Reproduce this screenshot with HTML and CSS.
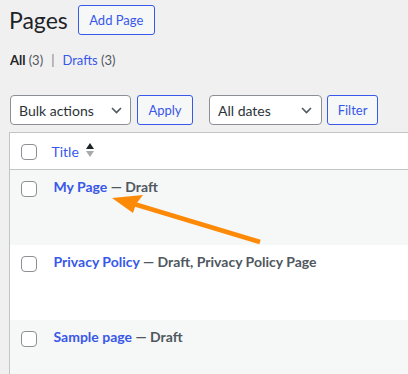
FILE: index.html
```html
<!DOCTYPE html>
<html>
<head>
   <meta charset="UTF-8">
   <title>Pages</title>
   <link rel="stylesheet" href="styles.css">
</head>
<body>
   <div class="wrap">
      <div class="page-head">
         <h1>Pages</h1>
         <a href="#" class="button add-new">Add Page</a>
      </div>

      <ul class="subsubsub">
         <li class="current">All <span class="count">(3)</span></li>
         <li class="sep">|</li>
         <li><a href="#">Drafts</a> <span class="count">(3)</span></li>
      </ul>

      <div class="tablenav">
         <div class="select bulk">
            <span>Bulk actions</span>
            <svg width="11" height="7" viewBox="0 0 11 7"><path d="M1 1l4.5 4.5L10 1" fill="none" stroke="#50575e" stroke-width="1.6"/></svg>
         </div>
         <a href="#" class="button apply">Apply</a>
         <div class="select dates">
            <span>All dates</span>
            <svg width="11" height="7" viewBox="0 0 11 7"><path d="M1 1l4.5 4.5L10 1" fill="none" stroke="#50575e" stroke-width="1.6"/></svg>
         </div>
         <a href="#" class="button filter">Filter</a>
      </div>

      <table class="list">
         <thead>
            <tr>
               <th class="cb"><span class="checkbox"></span></th>
               <th class="title-col">
                  <a href="#">Title</a>
                  <svg class="sort" width="8" height="15" viewBox="0 0 8 15">
                     <path d="M4 0L8 6H0z" fill="#1d2327"/>
                     <path d="M0 8h8l-4 6z" fill="#a7aaad"/>
                  </svg>
               </th>
            </tr>
         </thead>
         <tbody>
            <tr class="alt">
               <td class="cb"><span class="checkbox"></span></td>
               <td class="title-col"><strong><a href="#">My Page</a> <span class="state">— Draft</span></strong></td>
            </tr>
            <tr>
               <td class="cb"><span class="checkbox"></span></td>
               <td class="title-col"><strong><a href="#">Privacy Policy</a> <span class="state">— Draft, Privacy Policy Page</span></strong></td>
            </tr>
            <tr class="alt last">
               <td class="cb"><span class="checkbox"></span></td>
               <td class="title-col"><strong><a href="#">Sample page</a> <span class="state">— Draft</span></strong></td>
            </tr>
         </tbody>
      </table>
   </div>

   <!-- annotation arrow pointing at the first row -->
   <svg class="pointer" width="408" height="374" viewBox="0 0 408 374">
      <line x1="260" y1="242" x2="134" y2="204" stroke="#fd8a06" stroke-width="4.5"/>
      <polygon points="112,198 143,195 136,204 133,213" fill="#fd8a06"/>
   </svg>
</body>
</html>
```

FILE: styles.css
```css
      body {
         margin: 0;
         background: #f0f0f1;
         color: #1d2327;
         font-family: "Lato", "Liberation Sans", sans-serif;
         font-size: 13px;
         overflow: hidden;
      }
      a {
         text-decoration: none;
         color: #3858e9;
      }
      .wrap {
         padding: 5px 0 0 9px;
      }
      .page-head {
         display: flex;
         align-items: center;
         gap: 10px;
      }
      h1 {
         margin: 0;
         font-size: 23px;
         font-weight: normal;
         line-height: 30px;
      }
      .button {
         display: inline-flex;
         align-items: center;
         justify-content: center;
         box-sizing: border-box;
         height: 30px;
         border: 1px solid #3858e9;
         border-radius: 3px;
         background: #f6f7f7;
         color: #3858e9;
         font-size: 13px;
      }
      .add-new {
         width: 77px;
      }
      .apply {
         width: 56px;
         margin-left: 6px;
      }
      .filter {
         width: 51px;
         margin-left: 5px;
      }

      .subsubsub {
         list-style: none;
         margin: 15px 0 0 0;
         padding: 0 0 0 1px;
         display: flex;
         gap: 6px;
         line-height: 20px;
         color: #50575e;
      }
      .subsubsub .current {
         color: #1d2327;
         font-weight: bold;
      }
      .subsubsub .count {
         font-weight: normal;
         color: #50575e;
      }
      .subsubsub .sep {
         color: #787c82;
         margin: 0 2px;
      }

      .tablenav {
         display: flex;
         margin-top: 25px;
         padding-left: 1px;
      }
      .select {
         display: flex;
         align-items: center;
         justify-content: space-between;
         box-sizing: border-box;
         height: 30px;
         padding: 0 8px;
         border: 1px solid #8c8f94;
         border-radius: 4px;
         background: white;
         color: #2c3338;
         font-size: 14px;
      }
      .bulk {
         width: 121px;
      }
      .dates {
         width: 113px;
         margin-left: 16px;
         padding-right: 9px;
      }

      /* table runs off the right and bottom edge, so no border there */
      table.list {
         margin-top: 7px;
         width: 100%;
         border-collapse: collapse;
         border: 1px solid #c3c4c7;
         border-right: none;
         border-bottom: none;
         background: white;
         font-size: 14px;
      }
      table.list th {
         box-sizing: border-box;
         height: 37px;
         padding: 0;
         text-align: left;
         font-weight: normal;
         vertical-align: middle;
         border-bottom: 1px solid #c3c4c7;
      }
      table.list td {
         height: 75px;
         padding: 0;
         vertical-align: top;
         box-sizing: border-box;
      }
      table.list tr.last td {
         height: 54px;
      }
      tr.alt {
         background: #f6f7f7;
      }
      .cb {
         width: 41px;
         padding-left: 11px !important;
         box-sizing: border-box;
      }
      table.list th.cb {
         vertical-align: top;
         padding-top: 11px;
      }
      td.cb .checkbox {
         margin-top: 11px;
      }
      .checkbox {
         display: block;
         width: 16px;
         height: 16px;
         box-sizing: border-box;
         border: 1px solid #8c8f94;
         border-radius: 4px;
         background: white;
      }
      th.title-col {
         padding: 0 0 2px 1px !important;
      }
      th.title-col a,
      th.title-col .sort {
         vertical-align: middle;
      }
      th.title-col .sort {
         margin-left: 4px;
      }
      td.title-col {
         padding: 7px 0 0 3px !important;
         line-height: 20px;
      }
      .state {
         color: #50575e;
      }

      .pointer {
         position: absolute;
         left: 0;
         top: 0;
         pointer-events: none;
      }
```
